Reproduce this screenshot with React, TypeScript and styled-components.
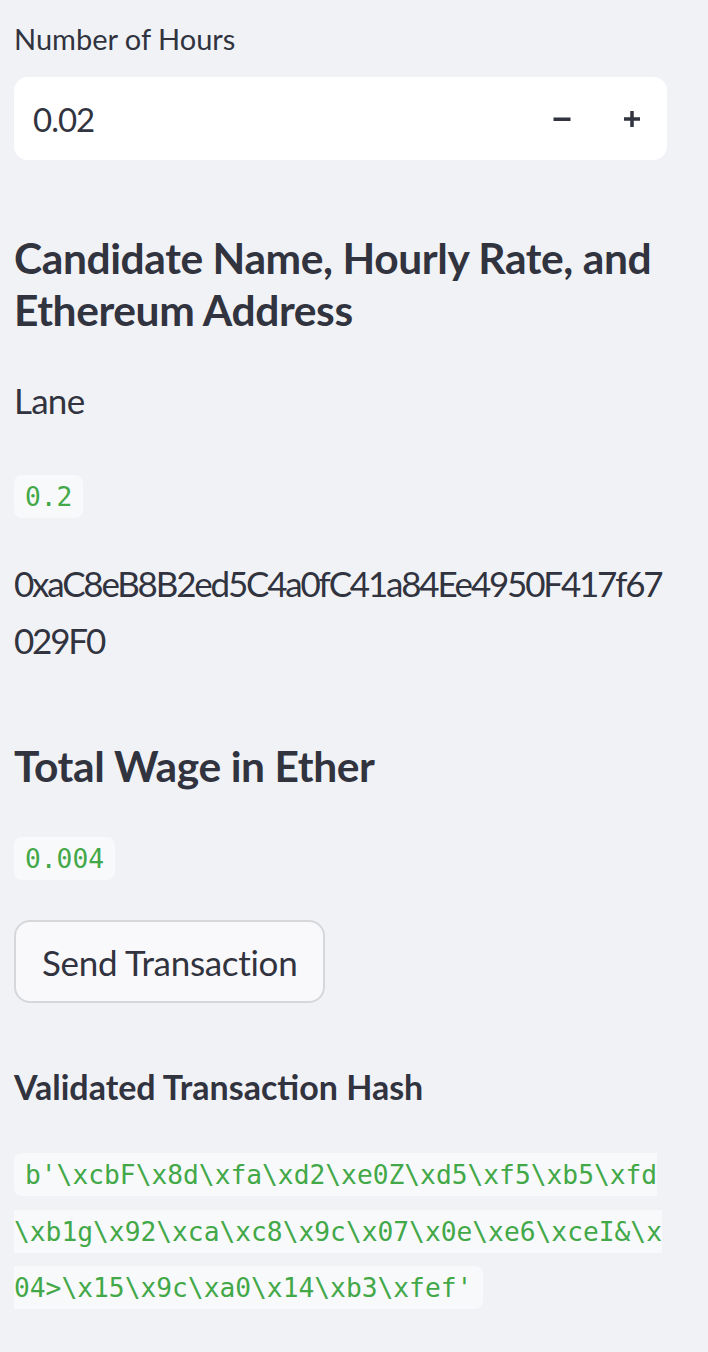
import React from "react";
import styled, { createGlobalStyle } from "styled-components";

const GlobalStyle = createGlobalStyle`
  html, body {
    margin: 0;
    padding: 0;
    background: #f0f2f6;
  }
  body {
    font-family: "Lato", "Noto Sans", sans-serif;
    color: #31333f;
  }
`;

const Main = styled.main`
  display: flex;
  flex-direction: column;
  width: 653px;
  padding: 15px 41px 40px 14px;
`;

const Label = styled.label`
  font-size: 29px;
  line-height: 48px;
  margin: 0 0 14px;
`;

const NumberBox = styled.div`
  display: flex;
  align-items: center;
  height: 83px;
  background: #ffffff;
  border-radius: 14px;
`;

const NumberValue = styled.span`
  flex: 1;
  padding-left: 19px;
  font-size: 33px;
  letter-spacing: -1px;
`;

const StepButton = styled.button`
  width: 70px;
  height: 83px;
  border: none;
  background: transparent;
  display: flex;
  align-items: center;
  justify-content: center;
  padding: 0;
  color: #31333f;
`;

const Heading = styled.h3<{ $top: number }>`
  margin: ${(p) => p.$top}px 0 0;
  font-size: 42.5px;
  line-height: 52px;
  letter-spacing: -0.4px;
  font-weight: 700;
`;

const SubHeading = styled.h5<{ $top: number }>`
  margin: ${(p) => p.$top}px 0 0;
  font-size: 34px;
  line-height: 48px;
  font-weight: 700;
`;

const Para = styled.p<{ $top: number; $lh?: number; $ls?: number }>`
  margin: ${(p) => p.$top}px 0 0;
  font-size: 35px;
  line-height: ${(p) => p.$lh ?? 56}px;
  letter-spacing: ${(p) => p.$ls ?? 0}px;
  word-break: break-all;
`;

const Code = styled.code`
  font-family: "DejaVu Sans Mono", "Liberation Mono", monospace;
  font-size: 26.25px;
  line-height: 1;
  letter-spacing: 0;
  vertical-align: 4.4px;
  color: #42a848;
  background: #f8f9fb;
  padding: 6.5px 11px;
  border-radius: 8px;
`;

const ActionButton = styled.button`
  align-self: flex-start;
  margin-top: 34px;
  height: 83px;
  padding: 0 26px;
  font-family: inherit;
  font-size: 35px;
  letter-spacing: -0.3px;
  color: #31333f;
  background: #f9f9fb;
  border: 2px solid #d6d7db;
  border-radius: 16px;
`;

const Minus = () => (
  <svg width="18" height="18" viewBox="0 0 18 18">
    <rect x="0.5" y="7.5" width="17" height="3.5" fill="currentColor" />
  </svg>
);

const Plus = () => (
  <svg width="18" height="18" viewBox="0 0 18 18">
    <rect x="1" y="7.25" width="16" height="3.5" fill="currentColor" />
    <rect x="7.25" y="1" width="3.5" height="16" fill="currentColor" />
  </svg>
);

export default function App() {
  return (
    <>
      <GlobalStyle />
      <Main>
        <Label>Number of Hours</Label>
        <NumberBox>
          <NumberValue>0.02</NumberValue>
          <StepButton aria-label="decrement">
            <Minus />
          </StepButton>
          <StepButton aria-label="increment">
            <Plus />
          </StepButton>
        </NumberBox>

        <Heading $top={72}>Candidate Name, Hourly Rate, and Ethereum Address</Heading>
        <Para $top={36} $ls={-0.75}>
          Lane
        </Para>
        <Para $top={40}>
          <Code>0.2</Code>
        </Para>
        <Para $top={31} $lh={57} $ls={-2.2}>
          0xaC8eB8B2ed5C4a0fC41a84Ee4950F417f67029F0
        </Para>

        <Heading $top={71}>Total Wage in Ether</Heading>
        <Para $top={38}>
          <Code>0.004</Code>
        </Para>
        <ActionButton>Send Transaction</ActionButton>

        <SubHeading $top={60}>Validated Transaction Hash</SubHeading>
        <Para $top={35} $lh={56.5}>
          <Code>
            {"b'\\xcbF\\x8d\\xfa\\xd2\\xe0Z\\xd5\\xf5\\xb5\\xfd\\xb1g\\x92\\xca\\xc8\\x9c\\x07\\x0e\\xe6\\xceI&\\x04>\\x15\\x9c\\xa0\\x14\\xb3\\xfef'"}
          </Code>
        </Para>
      </Main>
    </>
  );
}
